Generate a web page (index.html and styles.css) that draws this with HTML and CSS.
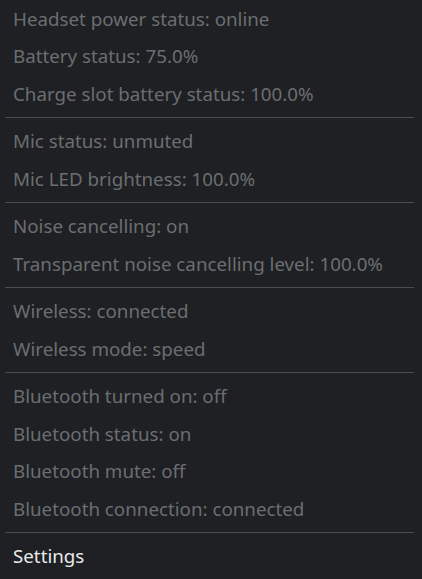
FILE: index.html
```html
<!DOCTYPE html>
<html>
<head>
<meta charset="utf-8">
<link rel="stylesheet" href="styles.css">
</head>
<body>
<div class="menu">
  <div class="item disabled">Headset power status: online</div>
  <div class="item disabled">Battery status: 75.0%</div>
  <div class="item disabled">Charge slot battery status: 100.0%</div>
  <div class="sep"></div>
  <div class="item disabled">Mic status: unmuted</div>
  <div class="item disabled">Mic LED brightness: 100.0%</div>
  <div class="sep"></div>
  <div class="item disabled">Noise cancelling: on</div>
  <div class="item disabled">Transparent noise cancelling level: 100.0%</div>
  <div class="sep"></div>
  <div class="item disabled">Wireless: connected</div>
  <div class="item disabled">Wireless mode: speed</div>
  <div class="sep"></div>
  <div class="item disabled">Bluetooth turned on: off</div>
  <div class="item disabled">Bluetooth status: on</div>
  <div class="item disabled">Bluetooth mute: off</div>
  <div class="item disabled">Bluetooth connection: connected</div>
  <div class="sep"></div>
  <div class="item">Settings</div>
</div>
</body>
</html>
```
FILE: styles.css
```css
html, body {
  margin: 0;
  padding: 0;
  background: #1e2023;
  height: 100%;
}
.menu {
  display: flex;
  flex-direction: column;
  font-family: "Noto Sans", "DejaVu Sans", sans-serif;
  font-size: 18.75px;
}
.item {
  height: 37.5px;
  display: flex;
  align-items: center;
  padding-left: 13px;
  padding-bottom: 1px;
  box-sizing: border-box;
  color: #e9eaeb;
  white-space: nowrap;
}
.item.disabled {
  color: #6b6e71;
}
.sep {
  height: 10px;
  display: flex;
  align-items: flex-start;
  padding: 0 8px 0 5px;
}
.sep::before {
  content: "";
  display: block;
  margin-top: 4px;
  height: 1px;
  flex: 1;
  background: #4b4d50;
}
```
